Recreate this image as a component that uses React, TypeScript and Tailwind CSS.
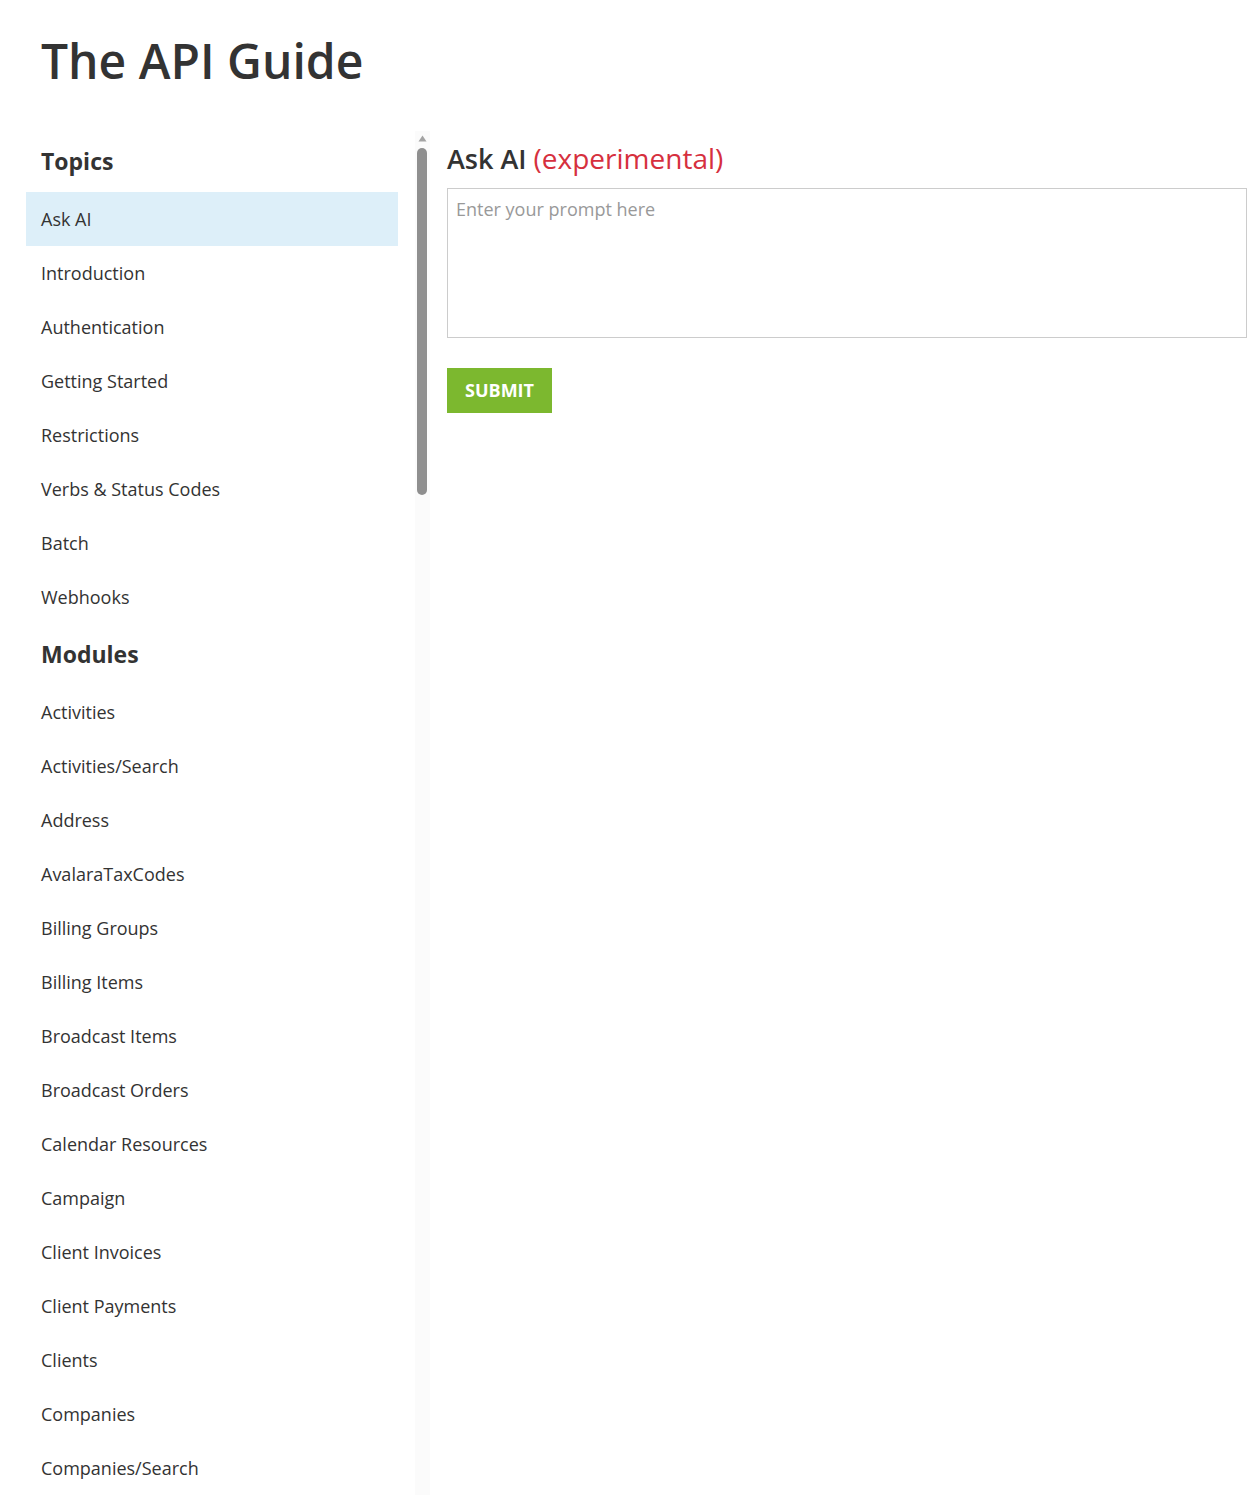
import React from "react";

const topics = [
  "Ask AI",
  "Introduction",
  "Authentication",
  "Getting Started",
  "Restrictions",
  "Verbs & Status Codes",
  "Batch",
  "Webhooks",
];

const modules = [
  "Activities",
  "Activities/Search",
  "Address",
  "AvalaraTaxCodes",
  "Billing Groups",
  "Billing Items",
  "Broadcast Items",
  "Broadcast Orders",
  "Calendar Resources",
  "Campaign",
  "Client Invoices",
  "Client Payments",
  "Clients",
  "Companies",
  "Companies/Search",
];

function Item({ label, active }: { label: string; active?: boolean }) {
  return (
    <div
      className={`h-[54px] flex items-center pl-[15px] text-[18px] text-[#333] ${
        active ? "bg-[#ddeff9]" : ""
      }`}
    >
      {label}
    </div>
  );
}

function Heading({ label }: { label: string }) {
  return (
    <div className="h-[61px] flex items-center pl-[15px] text-[23px] font-bold text-[#333]">
      {label}
    </div>
  );
}

export default function App() {
  return (
    <div
      className="w-[1251px] h-[1495px] overflow-hidden bg-white"
      style={{ fontFamily: '"Open Sans", "Noto Sans", sans-serif' }}
    >
      <div className="pl-[41px] pt-[28px] h-[131px]">
        <h1 className="text-[48px] leading-[66px] text-[#333] font-semibold">The API Guide</h1>
      </div>
      <div className="flex pl-[26px]">
        <div className="w-[372px] shrink-0">
          <Heading label="Topics" />
          {topics.map((t, i) => (
            <Item key={t} label={t} active={i === 0} />
          ))}
          <Heading label="Modules" />
          {modules.map((t) => (
            <Item key={t} label={t} />
          ))}
        </div>
        <div className="w-[15px] ml-[17px] shrink-0 bg-[#fbfbfb] relative h-[1364px]">
          <svg className="absolute left-[3px] top-[4px]" width="9" height="7" viewBox="0 0 9 7">
            <polygon points="4.5,0.5 8.5,6.5 0.5,6.5" fill="#a3a3a3" />
          </svg>
          <div className="absolute left-[2px] top-[17px] w-[10px] h-[347px] rounded-full bg-[#8f8f8f]" />
        </div>
        <div className="flex-1 pl-[17px] pr-[4px]">
          <h2 className="h-[57px] pt-[9px] text-[27px] leading-[36px] font-semibold text-[#333]">
            Ask AI <span className="text-[28px] font-normal text-[#d6303e]">(experimental)</span>
          </h2>
          <textarea
            className="block w-full h-[150px] border border-[#cccccc] px-[8px] pt-[6px] pb-[7px] text-[18px] leading-[28px] text-[#333] placeholder:text-[#999] resize-none outline-none"
            placeholder="Enter your prompt here"
          />
          <button className="mt-[30px] h-[45px] w-[105px] bg-[#7cb82f] text-white text-[18px] font-bold">
            SUBMIT
          </button>
        </div>
      </div>
    </div>
  );
}
